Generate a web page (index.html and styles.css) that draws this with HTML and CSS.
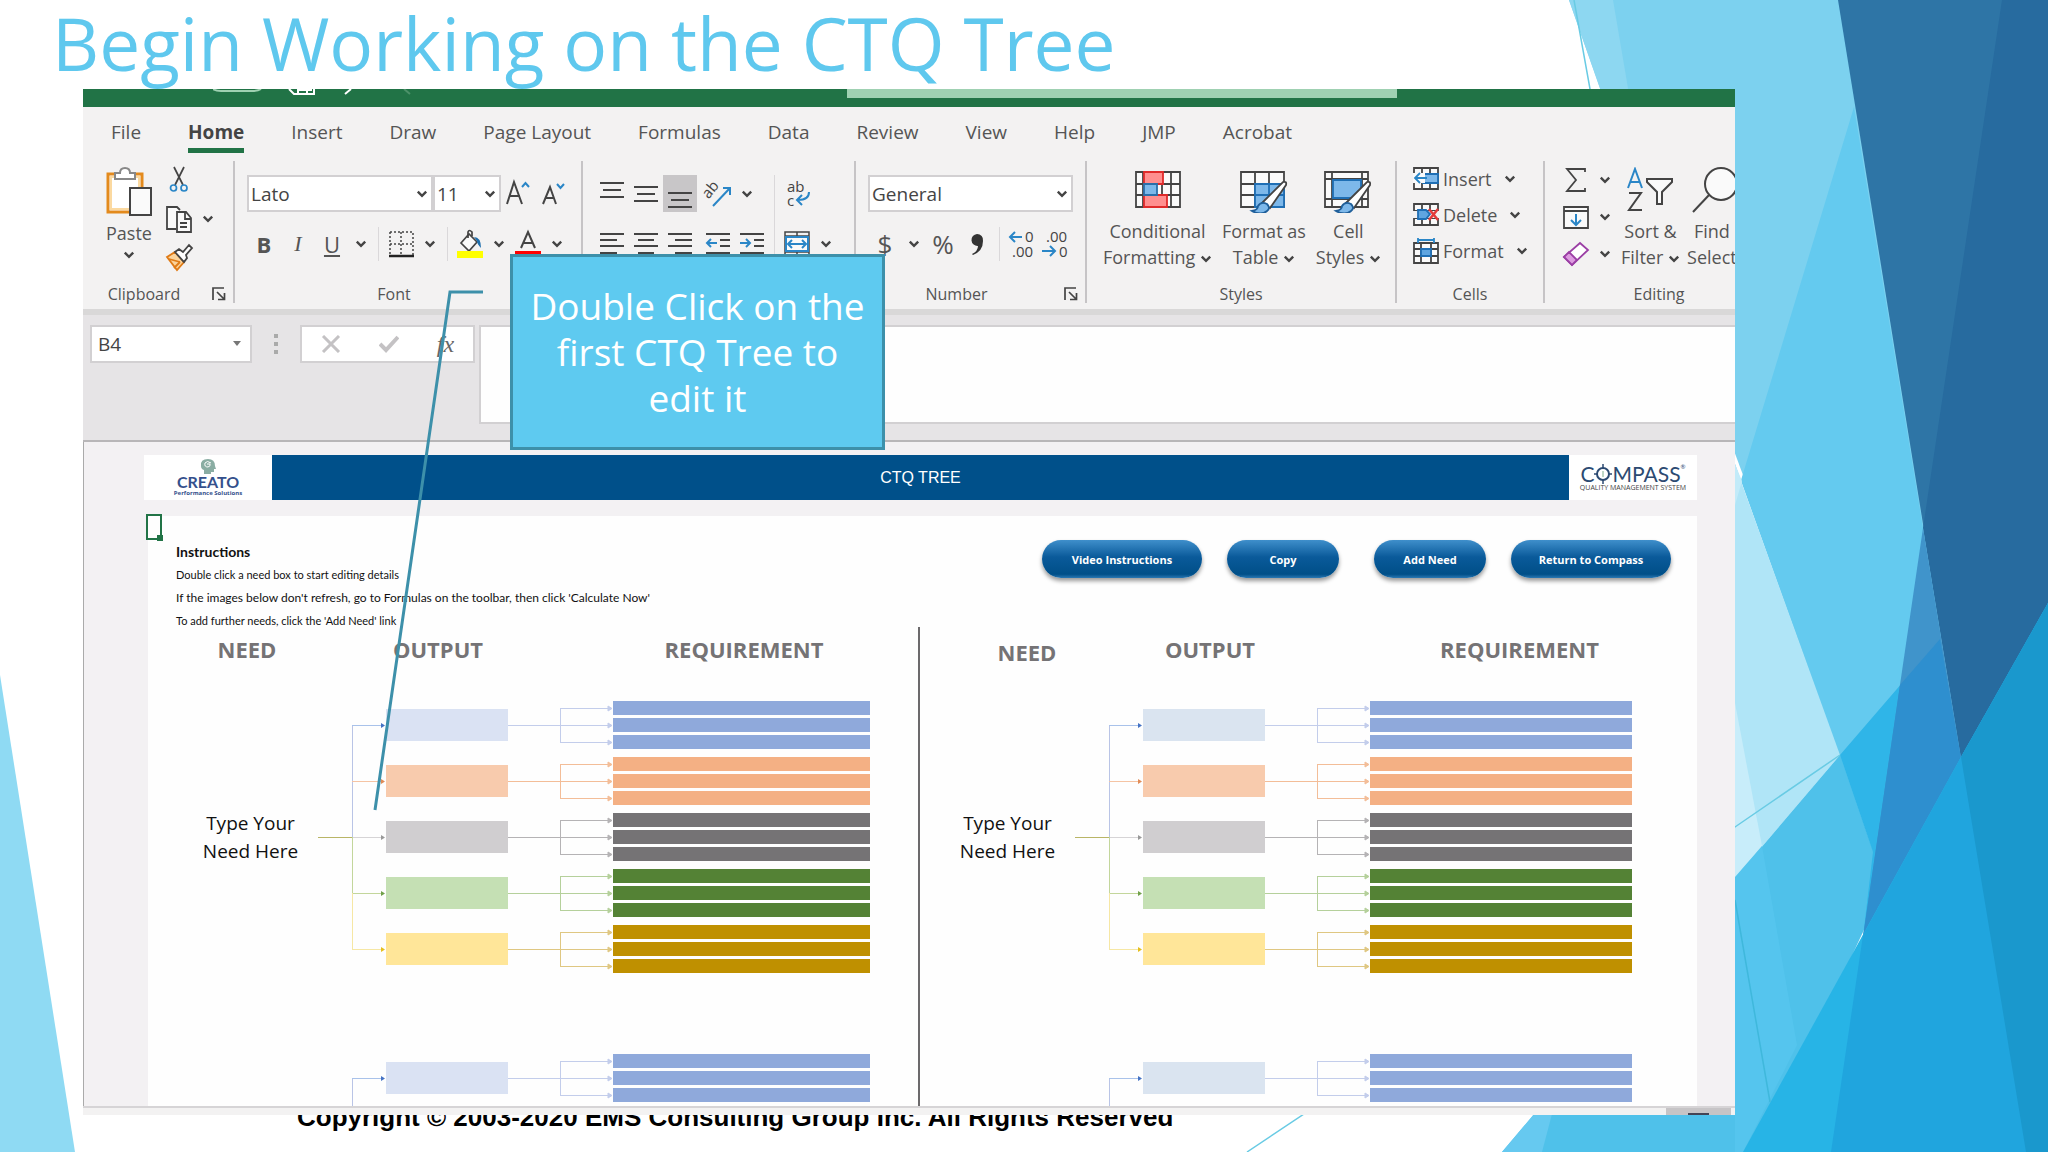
FILE: index.html
```html
<!DOCTYPE html>
<html lang="en">
<head>
  <meta charset="UTF-8" />
  <meta name="viewport" content="width=device-width, initial-scale=1.0" />
  <title>Begin Working on the CTQ Tree</title>
  <link rel="stylesheet" href="styles.css">
</head>
<body>
  <svg class="defs" width="0" height="0" aria-hidden="true">
    <symbol id="caret" viewBox="0 0 10 8"><path d="M1.5 2l3.500 3.500L8.500 2" fill="none" stroke="#444" stroke-width="2"/></symbol>
    <symbol id="launcher" viewBox="0 0 14 14"><path d="M1 13V1h11M5 5l7 7M12.500 6v6.500H6" fill="none" stroke="#444" stroke-width="1.700"/></symbol>
  </svg>

  <div class="slide">
    <svg class="facets" viewBox="0 0 2048 1152" preserveAspectRatio="none" aria-hidden="true">
      <path fill="#8fdaf3" d="M0 675L75 1152H0z"/>
      <path fill="#7cd1ef" d="M1569 0H2048V700L1900 900L1600 88z"/>
      <path fill="#8dd7f1" d="M1569 0H1613L1630 100H1604z"/>
      <path fill="#64caef" d="M1854 107L1735 500V464L1880 870L1960 760L1923 528z"/>
      <path fill="#b0e5f7" d="M1725 437L1840 755L1725 890z"/>
      <path fill="#c8edfa" d="M1725 650L1762 846L1725 890z"/>
      <path fill="#c2ebf9" d="M1735 464L1742 481L1735 505z"/>
      <path fill="#4fc1ea" d="M1502 1152L1840 755L1885 885L1760 1152z"/>
      <path fill="#66c9f0" d="M1502 1152L1534 1114H1552L1542 1152z"/>
      <path fill="#55c5ee" d="M1735 877L1762 846L1797 1045L1743 1152H1735z"/>
      <path fill="#2fb5e8" d="M1840 755L1940 639L1863 937L1873 852z"/>
      <path fill="#2e75a6" d="M1838 0H2048V700L1961 758z"/>
      <path fill="#276b9f" d="M2002 0H2048V720L1961 758L1923 528z"/>
      <path fill="#4094cb" d="M1923 528L1961 758L1863 937z"/>
      <path fill="#2e8fcf" d="M1900 685L1940 639L1961 758L1863 937z"/>
      <path fill="#27b4e6" d="M1743 1152L1961 757L2048 603V1152z"/>
      <path fill="#20a5de" d="M1863 935L1961 757L2048 603V1152H1831z"/>
      <path fill="#1a98cd" d="M1961 757L2048 603V1152H2026z"/>
      <path fill="none" stroke="#69cbe4" stroke-width="1.500" d="M1247 1152L1735 827L1840 755M1574 0L1592 100"/>
      <path fill="none" stroke="#3fb8dc" stroke-width="1.500" d="M1735 900L1770 1102"/>
    </svg>

    <h1 class="slide-title">Begin Working on the CTQ Tree</h1>

    <main class="excel">
      <div class="titlebar">
        <svg class="quick-access" width="220" height="18" viewBox="0 0 220 18" fill="none" stroke="#fff" stroke-width="2" aria-hidden="true">
          <path d="M0 0q3 2 8 2h31q6 0 9-2" stroke="#9fd1b2"/>
          <path d="M76 0l5 5h20V0M85 0v5M85 1h14M94 0v5M132 5l6-5"/>
          <path d="M191 0l6 5" stroke="#4c9169"/>
        </svg>
        <div class="search"></div>
      </div>

      <nav class="tabs">
        <button>File</button>
        <button class="active">Home</button>
        <button>Insert</button>
        <button>Draw</button>
        <button>Page Layout</button>
        <button>Formulas</button>
        <button>Data</button>
        <button>Review</button>
        <button>View</button>
        <button>Help</button>
        <button>JMP</button>
        <button>Acrobat</button>
      </nav>

      <div class="ribbon">
        <section class="group clipboard">
          <div class="group-body">
            <button class="big">
              <svg width="48" height="50" viewBox="0 0 48 50" fill="none" stroke-width="2">
                <path d="M3 8h34v38H3z" fill="#fff" stroke="#e38a1d" stroke-width="3"/>
                <path d="M6 11h28v32H6z" stroke="#fbd9a0"/>
                <path d="M10 13V7h5q0-5 5-5t5 5h5v6z" fill="#fff" stroke="#888"/>
                <path d="M25 22h21v27H25z" fill="#fafafa" stroke="#444"/>
              </svg>
              <span>Paste</span>
              <svg class="caret"><use href="#caret"/></svg>
            </button>
            <div class="stack">
              <div class="row">
                <button class="tool" aria-label="Cut"><svg width="20" height="27" viewBox="0 0 20 27" fill="none" stroke-width="1.700"><path d="M5 1l9 18M15 1L6 19" stroke="#444"/><circle cx="4.500" cy="22" r="3" stroke="#2a86c7"/><circle cx="15" cy="22" r="3" stroke="#2a86c7"/></svg></button>
              </div>
              <div class="row">
                <button class="tool" aria-label="Copy"><svg width="28" height="28" viewBox="0 0 28 28" fill="#fafafa" stroke="#444" stroke-width="1.800"><path d="M11 24H2V2h10l3 3"/><path d="M12 7h9l5 6v14H12z"/><path d="M20 7v7h6M15 18h7M15 22h7" fill="none"/></svg></button>
                <button class="drop"><svg class="caret"><use href="#caret"/></svg></button>
              </div>
              <div class="row">
                <button class="tool" aria-label="Format Painter"><svg width="28" height="27" viewBox="0 0 28 27" stroke-width="1.800"><path d="M2 13l8-5 9 10-7 8z" fill="#fbd39a" stroke="#e07b16"/><path d="M4 15l11 3M9 24l6-6" stroke="#e07b16"/><path d="M10 8l4-3 4 3 6-7 3 3-6 7 1 3-3 4z" fill="#fff" stroke="#444"/></svg></button>
              </div>
            </div>
          </div>
          <footer><span>Clipboard</span><button class="launch" aria-label="Clipboard settings"><svg><use href="#launcher"/></svg></button></footer>
        </section>

        <section class="group font">
          <div class="group-body stack">
            <div class="row">
              <label class="select font-name"><select aria-label="Font"><option>Lato</option></select><svg class="caret"><use href="#caret"/></svg></label>
              <label class="select font-size"><select aria-label="Font size"><option>11</option></select><svg class="caret"><use href="#caret"/></svg></label>
              <button class="tool" aria-label="Increase font size"><svg width="26" height="28" viewBox="0 0 26 28" fill="none" stroke-width="2"><path d="M2 24L9 2l8 22M4 16h11" stroke="#444"/><path d="M17 7l3.500-4L24 7" stroke="#2a86c7"/></svg></button>
              <button class="tool" aria-label="Decrease font size"><svg width="26" height="28" viewBox="0 0 26 28" fill="none" stroke-width="2"><path d="M4 24l7-17 6 17M6 18h9" stroke="#444"/><path d="M18 4l3.500 4L25 4" stroke="#2a86c7"/></svg></button>
            </div>
            <div class="row">
              <button class="tool"><b>B</b></button>
              <button class="tool"><i>I</i></button>
              <button class="tool"><u>U</u></button>
              <button class="drop"><svg class="caret"><use href="#caret"/></svg></button>
              <span class="sep"></span>
              <button class="tool" aria-label="Borders"><svg width="26" height="28" viewBox="0 0 26 28" fill="none" stroke="#444" stroke-width="1.500"><path d="M2 2h23v24M2 2v24M13 2v24M2 14h23" stroke-dasharray="2 2"/><path d="M1 26h25" stroke="#222" stroke-width="2.500"/></svg></button>
              <button class="drop"><svg class="caret"><use href="#caret"/></svg></button>
              <span class="sep"></span>
              <button class="tool" aria-label="Fill Color"><svg width="28" height="30" viewBox="0 0 28 30" fill="none" stroke-width="1.700"><path d="M5 14l8-9 8 8-8 9z" fill="#fafafa" stroke="#444"/><path d="M12 9V3q1-3 4 0v4" stroke="#444"/><path d="M18 8q7 0 7 11-4-4-4-7z" fill="#1e6fae"/><path d="M1 22h26v7H1z" fill="#ff0"/></svg></button>
              <button class="drop"><svg class="caret"><use href="#caret"/></svg></button>
              <button class="tool" aria-label="Font Color"><svg width="28" height="30" viewBox="0 0 28 30" fill="none" stroke-width="2"><path d="M7 19L14 3l7 16M9 14h10" stroke="#444"/><path d="M1 22h26v7H1z" fill="#f00"/></svg></button>
              <button class="drop"><svg class="caret"><use href="#caret"/></svg></button>
            </div>
          </div>
          <footer><span>Font</span><button class="launch" aria-label="Font settings"><svg><use href="#launcher"/></svg></button></footer>
        </section>

        <section class="group alignment" aria-label="Alignment">
          <div class="group-body">
            <div class="tool-grid three">
              <button class="tool" aria-label="Top Align"><svg width="24" height="30" viewBox="0 0 24 30" stroke="#444" stroke-width="2"><path d="M0 4h24M3 11h18M0 18h24"/></svg></button>
              <button class="tool" aria-label="Middle Align"><svg width="24" height="30" viewBox="0 0 24 30" stroke="#444" stroke-width="2"><path d="M0 8h24M3 15h18M0 22h24"/></svg></button>
              <button class="tool pressed" aria-label="Bottom Align"><svg width="24" height="30" viewBox="0 0 24 30" stroke="#444" stroke-width="2"><path d="M0 14h24M3 21h18M0 28h24"/></svg></button>
              <button class="tool" aria-label="Align Left"><svg width="24" height="30" viewBox="0 0 24 30" stroke="#444" stroke-width="2"><path d="M0 5h24M0 11h17M0 17h24M0 24h17"/></svg></button>
              <button class="tool" aria-label="Center"><svg width="24" height="30" viewBox="0 0 24 30" stroke="#444" stroke-width="2"><path d="M0 5h24M4 11h16M0 17h24M4 24h16"/></svg></button>
              <button class="tool" aria-label="Align Right"><svg width="24" height="30" viewBox="0 0 24 30" stroke="#444" stroke-width="2"><path d="M0 5h24M7 11h17M0 17h24M7 24h17"/></svg></button>
            </div>
            <div class="tool-grid two">
              <button class="tool" aria-label="Orientation"><svg width="28" height="28" viewBox="0 0 28 28" fill="none" stroke-width="2"><text x="0" y="14" transform="rotate(-50 8 12)" class="glyph">ab</text><path d="M9 26L26 8M19 8h7v7" stroke="#2a86c7"/></svg></button>
              <button class="drop"><svg class="caret"><use href="#caret"/></svg></button>
              <button class="tool" aria-label="Decrease Indent"><svg width="24" height="30" viewBox="0 0 24 30" fill="none" stroke="#444" stroke-width="2"><path d="M0 5h24M14 11h10M14 17h10M0 24h24"/><path d="M11 14H1M5 10l-4 4 4 4" stroke="#2a86c7"/></svg></button>
              <button class="tool" aria-label="Increase Indent"><svg width="24" height="30" viewBox="0 0 24 30" fill="none" stroke="#444" stroke-width="2"><path d="M0 5h24M14 11h10M14 17h10M0 24h24"/><path d="M0 14h10M6 10l4 4-4 4" stroke="#2a86c7"/></svg></button>
            </div>
            <span class="sep tall"></span>
            <div class="stack">
              <div class="row">
                <button class="tool" aria-label="Wrap Text"><svg width="26" height="30" viewBox="0 0 26 30" fill="none" stroke-width="2"><text x="3" y="13" class="glyph">ab</text><text x="3" y="27" class="glyph">c</text><path d="M25 13q0 8-11 8M18 16l-5 5 5 5" stroke="#2a86c7"/></svg></button>
              </div>
              <div class="row">
                <button class="tool" aria-label="Merge and Center"><svg width="26" height="28" viewBox="0 0 26 28" fill="none" stroke="#444" stroke-width="1.500"><path d="M1 2h24v24H1zM13 2v24M1 6h24M1 22h24"/><path d="M2 7h22v14H2z" fill="#fafafa" stroke="#2a86c7" stroke-width="2"/><path d="M5 14h16M8 10l-4 4 4 4M18 10l4 4-4 4" stroke="#2a86c7" stroke-width="2"/></svg></button>
                <button class="drop"><svg class="caret"><use href="#caret"/></svg></button>
              </div>
            </div>
          </div>
        </section>

        <section class="group number">
          <div class="group-body stack">
            <div class="row">
              <label class="select number-format"><select aria-label="Number format"><option>General</option></select><svg class="caret"><use href="#caret"/></svg></label>
            </div>
            <div class="row">
              <button class="tool symbol">$</button>
              <button class="drop"><svg class="caret"><use href="#caret"/></svg></button>
              <button class="tool symbol">%</button>
              <button class="tool" aria-label="Comma Style"><svg width="16" height="24" viewBox="0 0 16 24"><path d="M8 2a6 6 0 0 1 6 7q0 10-10 14l-1-1q6-3 6-8a6 6 0 1 1-1-12z" fill="#333"/></svg></button>
              <span class="sep"></span>
              <button class="tool" aria-label="Increase Decimal"><svg width="28" height="30" viewBox="0 0 28 30" fill="none" stroke-width="2"><text x="17" y="13" class="glyph">0</text><text x="4" y="28" class="glyph">.00</text><path d="M14 8H2M7 3L2 8l5 5" stroke="#2a86c7"/></svg></button>
              <button class="tool" aria-label="Decrease Decimal"><svg width="28" height="30" viewBox="0 0 28 30" fill="none" stroke-width="2"><text x="4" y="13" class="glyph">.00</text><text x="17" y="28" class="glyph">0</text><path d="M0 22h13M8 17l5 5-5 5" stroke="#2a86c7"/></svg></button>
            </div>
          </div>
          <footer><span>Number</span><button class="launch" aria-label="Number settings"><svg><use href="#launcher"/></svg></button></footer>
        </section>

        <section class="group styles">
          <div class="group-body">
            <button class="big">
              <svg width="48" height="46" viewBox="0 0 48 46" fill="#fafafa" stroke="#444" stroke-width="1.800"><path d="M2 5h44v35H2zM9 5v35M37 5v35M2 17h44M2 28h44M28 5v35"/><path d="M10 5h19v12H10zM10 28h23v12H10z" fill="#ff8f8f" stroke="#e02b2b"/><path d="M10 17h13v11H10z" fill="#7db8ea" stroke="#2a6faa"/></svg>
              <span>Conditional</span>
              <span>Formatting <svg class="caret"><use href="#caret"/></svg></span>
            </button>
            <button class="big">
              <svg width="52" height="46" viewBox="0 0 52 46" fill="#fafafa" stroke="#444" stroke-width="1.800"><path d="M3 5h43v35H3zM17 5v35M31 5v35M3 17h43M3 28h43"/><path d="M17 17h29v23H17zM31 17v23M17 28h29" fill="#7db8ea" stroke="#1f6fb5"/><path d="M24 36L45 15q4-1 3 3L32 41z" fill="#fff" stroke="#444"/><path d="M14 44q6-1 6-5 3-5 9-2 4 4 0 7-6 5-15 0z" fill="#7db8ea" stroke="#1f5f9a"/></svg>
              <span>Format as</span>
              <span>Table <svg class="caret"><use href="#caret"/></svg></span>
            </button>
            <button class="big">
              <svg width="52" height="46" viewBox="0 0 52 46" fill="#fafafa" stroke="#444" stroke-width="1.800"><path d="M3 5h43v35H3zM10 5v35M40 5v35M3 12h43M3 32h43"/><path d="M11 13h28v18H11z" fill="#7db8ea" stroke="#1f6fb5"/><path d="M24 36L45 15q4-1 3 3L32 41z" fill="#fff" stroke="#444"/><path d="M14 44q6-1 6-5 3-5 9-2 4 4 0 7-6 5-15 0z" fill="#7db8ea" stroke="#1f5f9a"/></svg>
              <span>Cell</span>
              <span>Styles <svg class="caret"><use href="#caret"/></svg></span>
            </button>
          </div>
          <footer><span>Styles</span></footer>
        </section>

        <section class="group cells">
          <div class="group-body stack">
            <button class="wide"><svg width="26" height="26" viewBox="0 0 26 26" fill="#fafafa" stroke="#444" stroke-width="1.800"><path d="M1 2h24v21H1zM9 2v21M17 2v21M1 9h24M1 16h24"/><path d="M10 8h15v9H10z" fill="#7db8ea" stroke="#1f6fb5"/><path d="M0 7h12v10H0z" stroke="none"/><path d="M14 12H2M7 7l-5 5 5 5" fill="none" stroke="#2a86c7"/></svg><span>Insert</span><svg class="caret"><use href="#caret"/></svg></button>
            <button class="wide"><svg width="26" height="26" viewBox="0 0 26 26" fill="#fafafa" stroke="#444" stroke-width="1.800"><path d="M1 2h24v21H1zM9 2v21M17 2v21M1 9h24M1 16h24"/><path d="M0 9h26v7H0z" fill="#f3f2f2" stroke="none"/><path d="M5 8h8l4 4-4 5H5z" fill="#5fa5e0" stroke="#1f6fb5"/><path d="M16 7l9 11M25 7l-9 11" stroke="#e33b3b" stroke-width="2.500"/></svg><span>Delete</span><svg class="caret"><use href="#caret"/></svg></button>
            <button class="wide"><svg width="26" height="26" viewBox="0 0 26 26" fill="#fafafa" stroke="#444" stroke-width="1.800"><path d="M1 5h24v20H1zM8 5v20M18 5v20M1 11h24M1 18h24"/><path d="M8 11h10v7H8z" fill="#5fa5e0" stroke="#1f6fb5"/><path d="M5 2h16M5 0v5M21 0v5" stroke="#2a86c7" fill="none"/></svg><span>Format</span><svg class="caret"><use href="#caret"/></svg></button>
          </div>
          <footer><span>Cells</span></footer>
        </section>

        <section class="group editing">
          <div class="group-body">
            <div class="stack">
              <div class="row">
                <button class="tool" aria-label="AutoSum"><svg width="24" height="26" viewBox="0 0 24 26" fill="none" stroke="#444" stroke-width="1.800"><path d="M21 5V2H3l9 11-9 11h18v-3"/></svg></button>
                <button class="drop"><svg class="caret"><use href="#caret"/></svg></button>
              </div>
              <div class="row">
                <button class="tool" aria-label="Fill"><svg width="26" height="26" viewBox="0 0 26 26" fill="#fafafa" stroke="#444" stroke-width="1.800"><path d="M1 3h24v21H1zM1 7h24"/><path d="M13 10v11M8 16l5 5 5-5" stroke="#2a86c7" fill="none" stroke-width="2"/></svg></button>
                <button class="drop"><svg class="caret"><use href="#caret"/></svg></button>
              </div>
              <div class="row">
                <button class="tool" aria-label="Clear"><svg width="26" height="26" viewBox="0 0 26 26" fill="#fff" stroke="#9b3fa5" stroke-width="1.800"><path d="M1 16L17 2l8 7L9 24z"/><path d="M1 16l5-5 8 8-5 5z" fill="#dd9be0"/></svg></button>
                <button class="drop"><svg class="caret"><use href="#caret"/></svg></button>
              </div>
            </div>
            <button class="big">
              <svg width="48" height="46" viewBox="0 0 48 46" fill="none" stroke="#444" stroke-width="2"><path d="M2 21L9 2l7 19M4 15h10" stroke="#2a86c7"/><path d="M3 26h12L3 43h13"/><path d="M21 12h25v3L36 25v12h-5V25L21 15z" fill="#fafafa"/></svg>
              <span>Sort &amp;</span>
              <span>Filter <svg class="caret"><use href="#caret"/></svg></span>
            </button>
            <button class="big find">
              <svg width="52" height="46" viewBox="0 0 52 46" fill="#fafafa" stroke="#444" stroke-width="2"><circle cx="35" cy="17" r="16"/><path d="M23 28L7 45"/></svg>
              <span>Find</span>
              <span>Select</span>
            </button>
          </div>
          <footer><span>Editing</span></footer>
        </section>
      </div>

      <div class="formula-bar">
        <label class="name-box"><input type="text" value="B4" aria-label="Name box"><svg width="10" height="6" viewBox="0 0 10 6"><path d="M1 0h8L5 5z" fill="#777"/></svg></label>
        <svg class="grip" width="4" height="20" viewBox="0 0 4 20" fill="#aaa"><path d="M0 0h4v4H0zM0 8h4v4H0zM0 16h4v4H0z"/></svg>
        <div class="entry-tools">
          <button aria-label="Cancel"><svg width="20" height="18" viewBox="0 0 20 18" fill="none" stroke="#c4c2c4" stroke-width="3"><path d="M2 1l16 16M18 1L2 17"/></svg></button>
          <button aria-label="Enter"><svg width="20" height="18" viewBox="0 0 20 18" fill="none" stroke="#c4c2c4" stroke-width="4"><path d="M1 9l6 6L19 2"/></svg></button>
          <button class="fx">fx</button>
        </div>
        <textarea class="formula" aria-label="Formula"></textarea>
      </div>

      <div class="sheet">
        <div class="banner">
          <div class="logo creato">
            <svg width="18" height="16" viewBox="0 0 18 16"><path d="M2 8q-1-7 7-7 7 0 7 7l1 3h-2v3h-3v2H5v-4q-3-1-3-4z" fill="#8aada3"/><path d="M12 5q-4-3-6 0-1 4 3 4 3-1 2-3H8" fill="none" stroke="#fff"/></svg>
            <strong>CREATO</strong>
            <small>Performance Solutions</small>
          </div>
          <h2>CTQ TREE</h2>
          <div class="logo compass">
            <strong>C<svg width="18" height="20" viewBox="0 0 18 20" fill="none" stroke="#2c4a72" stroke-width="2"><circle cx="9" cy="10" r="6"/><path d="M9 0v5M9 15v5M0 10h4M14 10h4" stroke-width="1.500"/><path d="M9 7v6" stroke="#7fae8c" stroke-width="1"/></svg>MPASS<sup>®</sup></strong>
            <small>QUALITY MANAGEMENT SYSTEM</small>
          </div>
        </div>

        <div class="paper">
          <div class="cell-cursor"></div>
          <div class="intro">
            <div class="instructions">
              <h3>Instructions</h3>
              <p>Double click a need box to start editing details</p>
              <p class="long">If the images below don't refresh, go to Formulas on the toolbar, then click 'Calculate Now'</p>
              <p>To add further needs, click the 'Add Need' link</p>
            </div>
            <div class="actions">
              <button class="wide-pill">Video Instructions</button>
              <button>Copy</button>
              <button class="spaced">Add Need</button>
              <button class="wide-pill">Return to Compass</button>
            </div>
          </div>
          <div class="panels">
            <section class="panel">
              <div class="headings"><h4>NEED</h4><h4>OUTPUT</h4><h4>REQUIREMENT</h4></div>
            </section>
            <section class="panel">
              <div class="headings"><h4>NEED</h4><h4>OUTPUT</h4><h4>REQUIREMENT</h4></div>
            </section>
          </div>
        </div>
      </div>
      <div class="bottom-bar"><span class="scroll-end"></span></div>
    </main>

    <p class="copyright">Copyright © 2003-2020 EMS Consulting Group Inc. All Rights Reserved</p>

    <svg class="leader" width="120" height="524" viewBox="0 0 120 524" aria-hidden="true"><path d="M112 4H79L4 522" fill="none" stroke="#3d90aa" stroke-width="3"/></svg>
    <aside class="callout">Double Click on the first CTQ Tree to edit it</aside>
  </div>

  <script>
    const branches = ['blue', 'orange', 'gray', 'green', 'gold'];

    function branchHtml(color) {
      return `
        <div class="branch ${color}">
          <div class="output"></div>
          <svg class="connector" viewBox="0 0 105 48" preserveAspectRatio="none">
            <path d="M0 24.500H100M52.500 7V41M52 7.500H100M52 41.500H100"/>
            <path class="tip" d="M100 5l4 2.500-4 2.500zM100 22l4 2.500-4 2.500zM100 39l4 2.500-4 2.500z"/>
          </svg>
          <div class="requirements"><i></i><i></i><i></i></div>
        </div>`;
    }

    function treeHtml() {
      return `
        <div class="tree">
          <p class="need">Type Your<br>Need Here</p>
          <svg class="trunk" viewBox="0 0 68 272">
            <path stroke="#b9c4e6" d="M34.500 24V136"/>
            <path stroke="#a9c2ea" d="M34 24.500H64"/>
            <path stroke="#f5c4a4" d="M34 80.500H64"/>
            <path stroke="#d6d4d6" d="M34 136.500H64"/>
            <path stroke="#c3d69b" d="M34.500 136V192M34 192.500H64"/>
            <path stroke="#f6e7a4" d="M34.500 192V248M34 248.500H64"/>
            <path stroke="#b9b566" d="M0 136.500H34"/>
            <path fill="#4472c4" d="M63 22l4 2.500-4 2.500z"/>
            <path fill="#e08b56" d="M63 78l4 2.500-4 2.500z"/>
            <path fill="#999" d="M63 134l4 2.500-4 2.500z"/>
            <path fill="#70a04a" d="M63 190l4 2.500-4 2.500z"/>
            <path fill="#e5bf1f" d="M63 246l4 2.500-4 2.500z"/>
          </svg>
          <div class="branches">${branches.map(branchHtml).join('')}</div>
        </div>`;
    }

    document.querySelectorAll('.panel').forEach(panel => {
      panel.insertAdjacentHTML('beforeend', treeHtml() + treeHtml());
    });
  </script>
</body>
</html>
```
FILE: styles.css
```css
* {
  box-sizing: border-box;
}

body {
  margin: 0;
  font-family: 'Open Sans', 'Noto Sans', sans-serif;
  color: #444;
  background-color: #fff;
}

h1, h2, h3, h4, p {
  margin: 0;
}

button {
  font: inherit;
  color: inherit;
  background: none;
  border: 0;
  padding: 0;
  display: flex;
  align-items: center;
  justify-content: center;
}

.defs {
  position: absolute;
}

.slide {
  position: relative;
  height: 100vh;
  display: flex;
  flex-direction: column;
  overflow: hidden;
}

.facets {
  position: absolute;
  width: 100%;
  height: 100%;
}

.slide-title {
  position: relative;
  height: 89px;
  padding-left: 52px;
  font-size: 73px;
  font-weight: 400;
  line-height: 86px;
  color: #5fc8ee;
  white-space: nowrap;
}

.excel {
  position: relative;
  z-index: 1;
  flex: 1;
  min-height: 0;
  margin: 0 313px 0 83px;
  display: flex;
  flex-direction: column;
  overflow: hidden;
  background-color: #f3f2f2;
}

/* title bar and tabs */
.titlebar {
  flex: none;
  height: 18px;
  display: flex;
  background-color: #217346;
  padding-left: 130px;
}

.search {
  width: 550px;
  height: 9px;
  margin-left: 414px;
  background-color: #9fd1b2;
}

.tabs {
  flex: none;
  height: 54px;
  display: flex;
  align-items: flex-start;
  gap: 47px;
  padding: 9px 0 0 28px;
  font-size: 19px;
  line-height: 32px;
  white-space: nowrap;
  color: #555;
}

.tabs .active {
  font-weight: 700;
  color: #444;
  border-bottom: 5px solid #217346;
}

/* ribbon */
.ribbon {
  flex: none;
  height: 154px;
  display: flex;
  overflow: hidden;
  padding-bottom: 6px;
  border-bottom: 6px solid #d9d8d8;
}

.group {
  flex: none;
  display: flex;
  flex-direction: column;
  border-right: 2px solid #c6c4c6;
  color: #555;
}

.group-body {
  flex: 1;
  min-height: 0;
  display: flex;
}

.stack {
  display: flex;
  flex-direction: column;
}

.row {
  display: flex;
  align-items: center;
}

.group footer {
  flex: none;
  display: flex;
  align-items: center;
  height: 18px;
  font-size: 16px;
  line-height: 18px;
}

.group footer span {
  flex: 1;
  text-align: center;
}

.launch {
  width: 28px;
}

.launch svg {
  width: 14px;
  height: 14px;
}

.caret {
  width: 12px;
  height: 10px;
}

.tool {
  width: 34px;
  height: 37px;
  font-size: 22px;
}

.tool svg {
  overflow: visible;
}

.tool i {
  font-family: 'Liberation Serif', serif;
}

.tool.pressed {
  background-color: #c8c6c8;
}

.tool.symbol {
  font-size: 26px;
}

.drop {
  width: 24px;
  height: 37px;
}

.glyph {
  font-size: 15px;
  fill: #444;
  stroke: none;
}

.sep {
  width: 1px;
  height: 34px;
  margin: 0 5px;
  background-color: #dad8da;
}

.sep.tall {
  height: 100px;
}

.big {
  flex-direction: column;
  justify-content: flex-start;
  font-size: 18px;
  line-height: 26px;
  white-space: nowrap;
}

.styles .big > svg,
.editing .big > svg {
  margin-bottom: 5px;
}

.select {
  position: relative;
  height: 37px;
  background-color: #fff;
  border: 2px solid #d2d0d2;
}

.select select {
  appearance: none;
  width: 100%;
  height: 100%;
  border: 0;
  padding: 0 2px;
  background: none;
  color: #444;
  font: inherit;
  font-size: 19px;
}

.select .caret {
  position: absolute;
  right: 3px;
  top: 12px;
}

.clipboard {
  width: 152px;
}

.clipboard .group-body {
  padding-left: 20px;
  gap: 7px;
}

.clipboard .stack {
  gap: 2px;
}

.clipboard .big {
  width: 52px;
  padding-top: 5px;
}

.clipboard .big span {
  margin: 4px 0;
}

.font {
  width: 348px;
}

.font .group-body,
.number .group-body {
  padding: 14px 12px 0;
  gap: 13px;
}

.font-name {
  width: 186px;
}

.font-size {
  width: 68px;
}

.alignment {
  width: 273px;
}

.alignment .group-body {
  padding: 14px 12px 0;
}

.alignment .stack {
  gap: 13px;
}

.tool-grid {
  display: grid;
  align-content: start;
  row-gap: 13px;
}

.tool-grid.three {
  grid-template-columns: repeat(3, 34px);
  margin-right: 4px;
}

.tool-grid.two {
  grid-template-columns: repeat(2, 34px);
}

.number {
  width: 231px;
}

.number-format {
  width: 205px;
}

.styles {
  width: 310px;
}

.styles .group-body {
  padding: 6px 14px 0 16px;
  justify-content: space-between;
}

.cells {
  width: 148px;
}

.wide {
  height: 36px;
  gap: 4px;
  padding-left: 16px;
  justify-content: flex-start;
  font-size: 18px;
}

.wide .caret {
  margin-left: 8px;
}

.editing {
  width: 228px;
  border-right: 0;
}

.editing .group-body {
  padding-left: 14px;
}

.editing .stack {
  margin-right: 4px;
}

.editing .big {
  margin-right: 6px;
  padding-top: 6px;
}

.editing .find {
  margin: 0;
}

/* formula bar */
.formula-bar {
  flex: none;
  height: 127px;
  display: flex;
  align-items: flex-start;
  padding: 10px 0 16px 7px;
  background-color: #e6e4e6;
  border-bottom: 2px solid #b8b6b8;
}

.name-box {
  display: flex;
  align-items: center;
  width: 162px;
  height: 38px;
  padding: 0 8px 0 6px;
  background-color: #fff;
  border: 2px solid #d2d0d2;
}

.name-box input {
  flex: 1;
  min-width: 0;
  padding: 0;
  border: 0;
  font: inherit;
  font-size: 19px;
  color: #444;
}

.grip {
  margin: 9px 22px 0 22px;
}

.entry-tools {
  display: flex;
  align-items: center;
  justify-content: space-around;
  width: 175px;
  height: 38px;
  margin-right: 4px;
  background-color: #fff;
  border: 2px solid #d2d0d2;
}

.fx {
  font-family: 'Liberation Serif', serif;
  font-size: 24px;
  font-style: italic;
  color: #666;
}

.formula {
  flex: 1;
  height: 100%;
  border: 2px solid #d2d0d2;
  border-right: 0;
  background-color: #fefefe;
  resize: none;
}

/* worksheet */
.sheet {
  flex: 1;
  min-height: 0;
  display: flex;
  flex-direction: column;
  padding: 13px 38px 0 60px;
  background-color: #f3f1f3;
  border-left: 1px solid #aaa;
}

.banner {
  flex: none;
  display: flex;
  height: 45px;
}

.banner h2 {
  flex: 1;
  background-color: #00508a;
  color: #fff;
  font-family: 'Liberation Sans', sans-serif;
  font-size: 16px;
  font-weight: 400;
  line-height: 45px;
  text-align: center;
}

.logo {
  width: 128px;
  display: flex;
  flex-direction: column;
  align-items: center;
  justify-content: center;
  background-color: #fff;
}

.logo strong {
  display: flex;
  align-items: center;
  font-family: Lato, sans-serif;
}

.creato strong {
  font-size: 16px;
  line-height: 15px;
  color: #34508c;
}

.creato small {
  font-size: 6px;
  font-weight: 700;
  line-height: 8px;
  color: #34508c;
}

.compass strong {
  font-size: 21px;
  font-weight: 400;
  line-height: 20px;
  color: #2c4a72;
}

.compass sup {
  font-size: 6px;
  line-height: 6px;
  align-self: flex-start;
}

.compass small {
  font-size: 7px;
  line-height: 8px;
  color: #444;
}

.paper {
  position: relative;
  flex: 1;
  min-height: 0;
  display: flex;
  flex-direction: column;
  margin: 16px 0 0 4px;
  background-color: #fefefe;
}

.cell-cursor {
  position: absolute;
  left: -2px;
  top: -2px;
  width: 16px;
  height: 26px;
  border: 2px solid #217346;
}

.cell-cursor::after {
  content: '';
  position: absolute;
  right: -3px;
  bottom: -3px;
  width: 6px;
  height: 6px;
  background-color: #217346;
}

.intro {
  flex: none;
  display: flex;
  justify-content: space-between;
  height: 111px;
  padding: 24px 26px 0 28px;
}

.instructions {
  font-family: Lato, sans-serif;
  font-size: 11px;
  line-height: 23px;
  color: #111;
  white-space: nowrap;
}

.instructions h3 {
  font-size: 14px;
  line-height: 23px;
}

.instructions .long {
  font-size: 12px;
}

.actions {
  display: flex;
  gap: 25px;
}

.actions button {
  width: 112px;
  height: 38px;
  border-radius: 19px;
  background: linear-gradient(#3f8fcb, #0a5a9a 45%, #004f88 90%, #2a78b4);
  box-shadow: 0 3px 4px rgba(0, 0, 0, 0.4);
  color: #fff;
  font-size: 11px;
  font-weight: 700;
}

.actions .wide-pill {
  width: 160px;
}

.actions .spaced {
  margin-left: 10px;
}

.panels {
  flex: 1;
  min-height: 0;
  display: grid;
  grid-template-columns: 772fr 777fr;
  overflow: hidden;
}

.panel:first-child {
  border-right: 2px solid #6c6a6c;
}

.headings {
  display: grid;
  grid-template-columns: 142px 240px 1fr;
  height: 74px;
  padding-left: 28px;
}

.headings h4 {
  font-size: 22px;
  line-height: 44px;
  text-align: center;
  color: #757375;
}

.headings h4:last-child {
  padding-left: 12px;
}

.panel:last-child h4:first-child {
  padding: 3px 0 0 16px;
}

.tree {
  display: flex;
  height: 272px;
  padding: 0 48px 0 35px;
  margin-bottom: 81px;
}

.panel:last-child .tree {
  padding: 0 65px 0 20px;
}

.need {
  width: 135px;
  align-self: center;
  font-size: 19px;
  line-height: 28px;
  text-align: center;
  color: #111;
}

.trunk {
  width: 68px;
  height: 272px;
  fill: none;
}

.branches {
  flex: 1;
  display: flex;
  flex-direction: column;
  gap: 8px;
}

.branch {
  display: flex;
  align-items: center;
  height: 48px;
}

.output {
  width: 122px;
  height: 32px;
}

.connector {
  width: 105px;
  height: 48px;
  fill: none;
  stroke: currentColor;
}

.connector .tip {
  fill: currentColor;
}

.requirements {
  flex: 1;
  display: grid;
  gap: 3px;
}

.requirements i {
  height: 14px;
}

.blue { color: #c3cdeb; }
.blue .output { background-color: #dae2f3; }
.blue i { background-color: #8fa9db; }
.panel:last-child .blue .output { background-color: #dae4f0; }

.orange { color: #f3bd98; }
.orange .output { background-color: #f8cbad; }
.orange i { background-color: #f4b084; }

.gray { color: #b5b3b5; }
.gray .output { background-color: #d0ced0; }
.gray i { background-color: #757375; }

.green { color: #b5d09b; }
.green .output { background-color: #c5e0b4; }
.green i { background-color: #548235; }

.gold { color: #dfc782; }
.gold .output { background-color: #ffe699; }
.gold i { background-color: #bf9000; }

.bottom-bar {
  flex: none;
  height: 9px;
  padding-right: 4px;
  background-color: #f3f2f2;
  border-top: 2px solid #d6d4d6;
}

.scroll-end {
  display: block;
  width: 65px;
  height: 7px;
  margin-left: auto;
  background: linear-gradient(#445, #445) center bottom / 21px 2px no-repeat #c6c4c6;
}

.copyright {
  position: relative;
  flex: none;
  height: 37px;
  padding-left: 297px;
  font-family: 'Liberation Sans', sans-serif;
  font-size: 26px;
  font-weight: 700;
  line-height: 4px;
  color: #000;
  white-space: nowrap;
}

/* annotation over the spreadsheet */
.leader {
  position: absolute;
  z-index: 2;
  left: 371px;
  top: 288px;
}

.callout {
  position: absolute;
  z-index: 3;
  left: 510px;
  top: 254px;
  width: 375px;
  display: flex;
  align-items: center;
  justify-content: center;
  padding: 26px 12px;
  background-color: #5ecaf0;
  border: 3px solid #3d90aa;
  color: #fff;
  font-size: 37px;
  line-height: 46px;
  text-align: center;
}
```
